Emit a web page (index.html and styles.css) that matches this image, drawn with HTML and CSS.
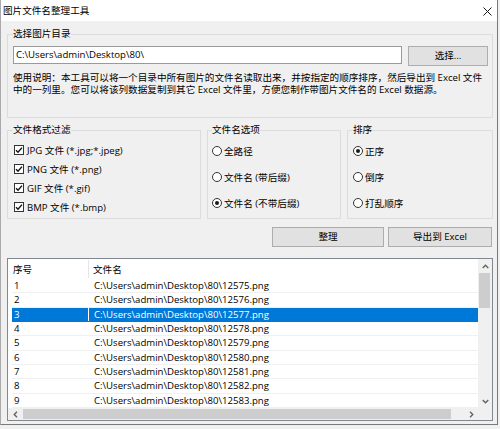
FILE: index.html
```html
<!DOCTYPE html>
<html lang="zh-CN">
<head>
<meta charset="utf-8">
<title>图片文件名整理工具</title>
<link rel="stylesheet" href="styles.css">
</head>
<body>
<div class="window">
  <div class="titlebar">
    <span class="title">图片文件名整理工具</span>
    <span class="close"><svg width="9" height="9" viewBox="0 0 9 9"><path d="M0.5 0.5L8.5 8.5M8.5 0.5L0.5 8.5" stroke="#1a1a1a" stroke-width="1" fill="none"/></svg></span>
  </div>
  <div class="client">
    <fieldset class="group dir">
      <legend>选择图片目录</legend>
      <div class="dir-row">
        <div class="textbox">C:\Users\admin\Desktop\80\</div>
        <button class="btn btn-browse">选择...</button>
      </div>
      <p class="desc">使用说明：本工具可以将一个目录中所有图片的文件名读取出来，并按指定的顺序排序，然后导出到 Excel 文件<br>中的一列里。您可以将该列数据复制到其它 Excel 文件里，方便您制作带图片文件名的 Excel 数据源。</p>
    </fieldset>

    <div class="options">
      <fieldset class="group filter">
        <legend>文件格式过滤</legend>
        <div class="check"><span class="box"><svg width="8" height="8" viewBox="0 0 8 8"><path d="M1 4.2L3 6.2L7 1.6" stroke="#111" stroke-width="1.4" fill="none"/></svg></span>JPG 文件 (*.jpg;*.jpeg)</div>
        <div class="check"><span class="box"><svg width="8" height="8" viewBox="0 0 8 8"><path d="M1 4.2L3 6.2L7 1.6" stroke="#111" stroke-width="1.4" fill="none"/></svg></span>PNG 文件 (*.png)</div>
        <div class="check"><span class="box"><svg width="8" height="8" viewBox="0 0 8 8"><path d="M1 4.2L3 6.2L7 1.6" stroke="#111" stroke-width="1.4" fill="none"/></svg></span>GIF 文件 (*.gif)</div>
        <div class="check"><span class="box"><svg width="8" height="8" viewBox="0 0 8 8"><path d="M1 4.2L3 6.2L7 1.6" stroke="#111" stroke-width="1.4" fill="none"/></svg></span>BMP 文件 (*.bmp)</div>
      </fieldset>
      <fieldset class="group names">
        <legend>文件名选项</legend>
        <div class="radio"><span class="dot"></span>全路径</div>
        <div class="radio"><span class="dot"></span>文件名 (带后缀)</div>
        <div class="radio"><span class="dot on"></span>文件名 (不带后缀)</div>
      </fieldset>
      <fieldset class="group sort">
        <legend>排序</legend>
        <div class="radio"><span class="dot on"></span>正序</div>
        <div class="radio"><span class="dot"></span>倒序</div>
        <div class="radio"><span class="dot"></span>打乱顺序</div>
      </fieldset>
    </div>

    <div class="actions">
      <button class="btn btn-sort">整理</button>
      <button class="btn btn-export">导出到 Excel</button>
    </div>

    <div class="list">
      <div class="list-body">
        <div class="list-head"><div class="c1">序号</div><div class="sep"></div><div class="c2">文件名</div></div>
        <div class="row"><div class="c1">1</div><div class="c2">C:\Users\admin\Desktop\80\12575.png</div></div>
        <div class="row"><div class="c1">2</div><div class="c2">C:\Users\admin\Desktop\80\12576.png</div></div>
        <div class="row selected"><div class="c1">3</div><div class="c2">C:\Users\admin\Desktop\80\12577.png</div></div>
        <div class="row"><div class="c1">4</div><div class="c2">C:\Users\admin\Desktop\80\12578.png</div></div>
        <div class="row"><div class="c1">5</div><div class="c2">C:\Users\admin\Desktop\80\12579.png</div></div>
        <div class="row"><div class="c1">6</div><div class="c2">C:\Users\admin\Desktop\80\12580.png</div></div>
        <div class="row"><div class="c1">7</div><div class="c2">C:\Users\admin\Desktop\80\12581.png</div></div>
        <div class="row"><div class="c1">8</div><div class="c2">C:\Users\admin\Desktop\80\12582.png</div></div>
        <div class="row"><div class="c1">9</div><div class="c2">C:\Users\admin\Desktop\80\12583.png</div></div>
      </div>
      <div class="vscroll">
        <div class="arrow"><svg width="7" height="5" viewBox="0 0 7 5"><path d="M0.7 4L3.5 1.2L6.3 4" stroke="#606060" stroke-width="1.3" fill="none"/></svg></div>
        <div class="vthumb"></div>
        <div class="spacer"></div>
        <div class="arrow"><svg width="7" height="5" viewBox="0 0 7 5"><path d="M0.7 1L3.5 3.8L6.3 1" stroke="#606060" stroke-width="1.3" fill="none"/></svg></div>
      </div>
      <div class="hscroll">
        <div class="harrow"><svg width="5" height="7" viewBox="0 0 5 7"><path d="M4 0.7L1.2 3.5L4 6.3" stroke="#606060" stroke-width="1.3" fill="none"/></svg></div>
        <div class="hthumb"></div>
        <div class="spacer"></div>
        <div class="harrow"><svg width="5" height="7" viewBox="0 0 5 7"><path d="M1 0.7L3.8 3.5L1 6.3" stroke="#606060" stroke-width="1.3" fill="none"/></svg></div>
      </div>
      <div class="corner"></div>
    </div>
  </div>
</div>
</body>
</html>
```

FILE: styles.css
```css
* { box-sizing: border-box; }
html, body { margin: 0; padding: 0; }
body {
  width: 500px;
  height: 429px;
  overflow: hidden;
  background: #f0f0f0;
  font-family: "Open Sans", "Noto Sans CJK SC", sans-serif;
  font-size: 9.6px;
  color: #000;
}
.window {
  width: 498px;
  height: 425px;
  background: #f0f0f0;
  border-left: 1px solid #aaaaaa;
  border-right: 1px solid #7a7a7a;
  border-bottom: 1px solid #7a7a7a;
  display: flex;
  flex-direction: column;
}
.titlebar {
  flex: none;
  height: 21px;
  background: #fff;
  display: flex;
  align-items: center;
  justify-content: space-between;
  padding: 0 5px 0 2px;
}
.title { line-height: 12px; }
.close { display: flex; margin-top: 1px; }
.client { padding: 7px 4px 0 6px; }

.group {
  margin: 0;
  min-width: 0;
  border: 1px solid #dcdcdc;
  padding: 0 4px 0 5px;
}
.group legend {
  padding: 0;
  height: 12px;
  line-height: 12px;
}

.dir { height: 90px; padding-top: 6px; }
.dir-row { display: flex; gap: 6px; align-items: flex-start; }
.textbox {
  width: 389px;
  height: 18px;
  border: 1px solid #9a9a9a;
  background: #fff;
  padding-left: 2px;
  line-height: 16px;
  white-space: nowrap;
}
.btn {
  height: 20px;
  border: 1px solid #adadad;
  background: #e1e1e1;
  font: inherit;
  color: #000;
  padding: 0;
  margin: 0;
  line-height: 18px;
}
.btn-browse { width: 80px; }
.desc {
  margin: 6px 0 0;
  line-height: 11.5px;
  white-space: nowrap;
}

.options { display: flex; gap: 6px; margin-top: 6px; }
.options .group { height: 95px; }
.filter { width: 194px; padding-top: 4.5px; }
.names { width: 134px; padding: 2px 4px 0 4px; }
.sort { width: 146px; padding: 2px 4px 0 5px; }

.check { display: flex; align-items: center; height: 19px; white-space: nowrap; }
.box {
  width: 10px;
  height: 10px;
  border: 1px solid #333;
  background: #fff;
  margin: 0 3px 0 1px;
  display: flex;
  align-items: center;
  justify-content: center;
  flex: none;
}
.radio { display: flex; align-items: center; height: 26px; white-space: nowrap; }
.dot {
  width: 10px;
  height: 10px;
  border-radius: 50%;
  border: 1px solid #333;
  background: #fff;
  margin-right: 2px;
  display: flex;
  align-items: center;
  justify-content: center;
  flex: none;
}
.dot.on::after {
  content: "";
  width: 4px;
  height: 4px;
  border-radius: 50%;
  background: #1a1a1a;
}

.actions { display: flex; justify-content: flex-end; gap: 4px; margin-top: 8px; padding-right: 1px; }
.btn-sort { width: 112px; }
.btn-export { width: 104px; }

.list {
  margin-top: 11px;
  width: 486px;
  height: 163px;
  border: 1px solid #828790;
  background: #fff;
  display: grid;
  grid-template-columns: 470px 14px;
  grid-template-rows: 149px 12px;
}
.list-body { overflow: hidden; padding-left: 4px; }
.list-head { display: flex; height: 20px; align-items: center; }
.list-head .c1 { width: 76px; padding-left: 1px; }
.list-head .sep { width: 1px; height: 18px; background: #e5e5e5; }
.list-head .c2 { padding-left: 4px; }
.row {
  display: flex;
  height: 14.35px;
  border-bottom: 1px solid #f0f0f0;
  line-height: 13.35px;
  white-space: nowrap;
}
.row .c1 { width: 76px; padding-left: 2px; }
.row .c2 { flex: 1; margin-left: 1px; padding-left: 5px; }
.row.selected { border-bottom-color: #0078d7; }
.row.selected .c1, .row.selected .c2 { background: #0078d7; color: #fff; }

.vscroll { background: #f0f0f0; display: flex; flex-direction: column; }
.vscroll .arrow { height: 14px; display: flex; align-items: center; justify-content: center; flex: none; }
.vthumb { height: 35px; margin: 0 2px 0 1px; background: #cdcdcd; flex: none; }
.spacer { flex: 1; }
.hscroll { background: #f0f0f0; display: flex; align-items: center; }
.harrow { width: 14px; height: 12px; display: flex; align-items: center; justify-content: center; flex: none; }
.hthumb { width: 428px; height: 10px; margin-left: 1px; background: #cdcdcd; flex: none; }
.corner { background: #f0f0f0; }
```
